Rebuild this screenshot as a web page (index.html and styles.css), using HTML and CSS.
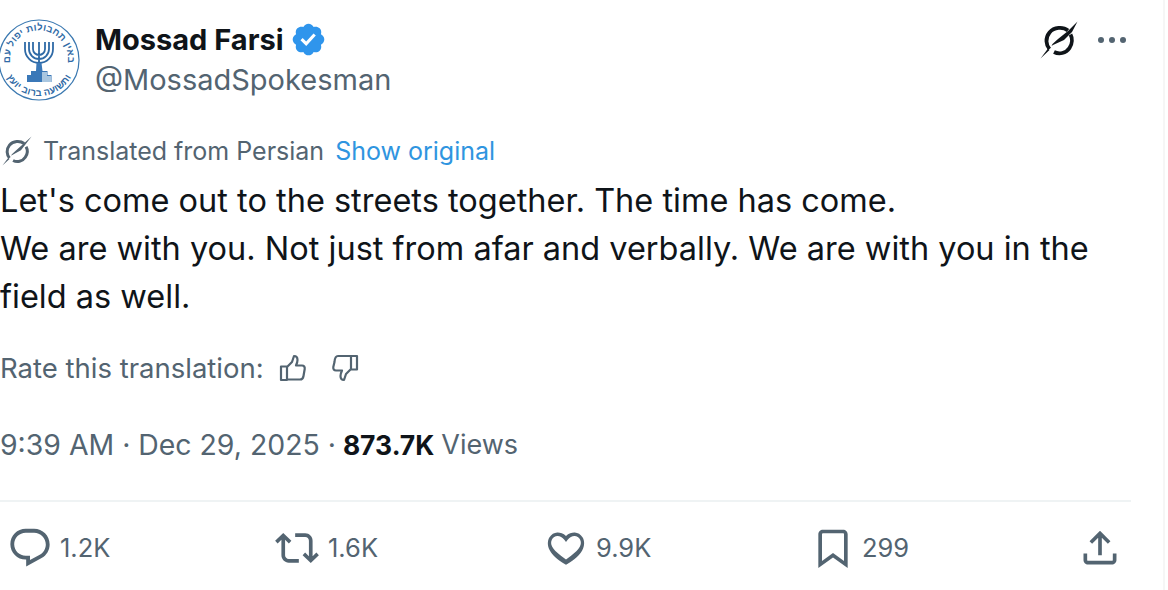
FILE: index.html
```html
<!DOCTYPE html>
<html lang="en">
<head>
<meta charset="utf-8">
<title>Mossad Farsi</title>
<link rel="stylesheet" href="styles.css">
</head>
<body>
<main class="tweet">
  <header class="head">
    <svg class="avatar" viewBox="0 0 82 82" aria-hidden="true">
      <circle cx="41" cy="41" r="40" fill="#fff" stroke="#3a78b0" stroke-width="1.2"/>
      <defs>
        <path id="ring-top" d="M14 51A29 29 0 1 1 68 51"/>
        <path id="ring-bot" d="M6 52A37 37 0 0 0 76 52"/>
      </defs>
      <text class="ringtext" text-anchor="middle"><textPath href="#ring-top" startOffset="50%">באין תחבולות יפול עם</textPath></text>
      <text class="ringtext" text-anchor="middle"><textPath href="#ring-bot" startOffset="50%">ותשועה ברוב יועץ</textPath></text>
      <g fill="none" stroke="#2f6aa6" stroke-width="1.800">
        <path d="M27 23v7a14 14 0 0 0 28 0v-7M31 23v7a10 10 0 0 0 20 0v-7M35 23v7a6 6 0 0 0 12 0v-7M41 23v24"/>
      </g>
      <path d="M38.500 44h5l1 8h5v4h4v7H29v-7h4v-4h5z" fill="#3a78b8"/>
      <path d="M44 53h5v4h4v6h-9z" fill="#a9c6e0"/>
    </svg>
    <div class="identity">
      <div class="name">Mossad Farsi
        <svg class="badge" viewBox="0 0 24 24" aria-hidden="true"><path fill="#2f95ec" d="M22.250 12c0-1.430-.880-2.670-2.190-3.340.460-1.390.200-2.900-.810-3.910s-2.520-1.270-3.910-.810c-.660-1.310-1.910-2.190-3.340-2.190s-2.670.880-3.330 2.190c-1.400-.460-2.910-.200-3.920.810s-1.260 2.520-.800 3.910c-1.310.670-2.200 1.910-2.200 3.340s.890 2.670 2.200 3.340c-.460 1.390-.210 2.900.800 3.910s2.520 1.260 3.910.810c.670 1.310 1.910 2.190 3.340 2.190s2.680-.880 3.340-2.190c1.390.450 2.900.200 3.910-.810s1.270-2.520.810-3.910c1.310-.670 2.190-1.910 2.190-3.340zm-11.710 4.200L6.800 12.460l1.410-1.420 2.260 2.260 4.800-5.230 1.470 1.360-6.200 6.770z"/></svg>
      </div>
      <div class="handle">@MossadSpokesman</div>
    </div>
    <div class="tools">
      <svg class="grok" viewBox="0 0 38 38" aria-hidden="true"><path fill="none" stroke="#0f1419" stroke-width="3.800" d="M28 9.500C23 5.500 14 6 9.500 11.500 5 17 6 24 9.500 28M14 31C19 33.500 26 32.500 29.500 27 32.500 22.500 32.500 17 30.500 13.500"/><path fill="#0f1419" d="M37.500 .500 32 11 24 19 13 24 11.500 25 12.500 23 18 18 28 10zM.500 37.500 8 27.500 9.500 29z"/></svg>
      <div class="dots"><span></span><span></span><span></span></div>
    </div>
  </header>

  <div class="translated">
    <svg class="grok-sm" viewBox="0 0 38 38" aria-hidden="true"><path fill="none" stroke="#536471" stroke-width="3.800" d="M28 9.500C23 5.500 14 6 9.500 11.500 5 17 6 24 9.500 28M14 31C19 33.500 26 32.500 29.500 27 32.500 22.500 32.500 17 30.500 13.500"/><path fill="#536471" d="M37.500 .500 24 18 13 24 11.500 25 12.500 23 18 18zM.500 37.500 8 27.500 9.500 29z"/></svg>
    <span>Translated from Persian</span>
    <a class="link">Show original</a>
  </div>

  <p class="body">Let's come out to the streets together. The time has come.<br>We are with you. Not just from afar and verbally. We are with you in the<br>field as well.</p>

  <div class="rate">
    <span>Rate this translation:</span>
    <svg class="thumb" viewBox="0 0 28 28" aria-hidden="true"><path d="M2 12.500h6V26H2zM8 13l5-5 2-6c2 0 3.500 1.500 3.500 4 0 2-.800 4-1.500 5.500h6c2 0 3 1.500 2.700 3.500l-1.200 7c-.300 2-1.500 3.500-3.500 3.500H8" /></svg>
    <svg class="thumb down" viewBox="0 0 28 28" aria-hidden="true"><path d="M20 2h6v13.500h-6zM20 15l-5 5-2 6c-2 0-3.500-1.500-3.500-4 0-2 .800-4 1.500-5.500H5c-2 0-3-1.500-2.700-3.500l1.200-5C3.800 3.500 5 2 7 2h13"/></svg>
  </div>

  <div class="meta">
    <span class="stamp">9:39 AM · Dec 29, 2025 ·</span>
    <strong>873.7K</strong>
    <span class="views">Views</span>
  </div>

  <div class="actions">
    <div class="action a-reply">
      <svg class="ico" viewBox="0 0 24 24" aria-hidden="true"><path d="M1.751 10c0-4.420 3.584-8 8.005-8h4.366c4.490 0 8.129 3.640 8.129 8.130 0 2.960-1.607 5.680-4.196 7.110l-8.054 4.460v-3.690h-.067c-4.490.100-8.183-3.510-8.183-8.010zm8.005-6c-3.317 0-6.005 2.690-6.005 6 0 3.370 2.770 6.080 6.138 6.010l.351-.010h1.761v2.300l5.087-2.810c1.951-1.080 3.163-3.130 3.163-5.360 0-3.390-2.744-6.130-6.129-6.130H9.756z"/></svg>
      <span>1.2K</span>
    </div>
    <div class="action a-rt">
      <svg class="ico" viewBox="0 0 24 24" aria-hidden="true"><path d="M4.500 3.880l4.432 4.140-1.364 1.460L5.500 7.550V16c0 1.100.896 2 2 2H13v2H7.500c-2.209 0-4-1.790-4-4V7.550L1.432 9.480.068 8.020 4.500 3.880zM16.500 6H11V4h5.500c2.209 0 4 1.790 4 4v8.450l2.068-1.930 1.364 1.460-4.432 4.140-4.432-4.140 1.364-1.460 2.068 1.930V8c0-1.100-.896-2-2-2z"/></svg>
      <span>1.6K</span>
    </div>
    <div class="action a-like">
      <svg class="ico" viewBox="0 0 24 24" aria-hidden="true"><path d="M16.697 5.500c-1.222-.060-2.679.510-3.890 2.160l-.805 1.090-.806-1.090C9.984 6.010 8.526 5.440 7.304 5.500c-1.243.070-2.349.780-2.970 1.910-.611 1.120-.630 2.540.143 3.950.747 1.360 2.278 2.990 4.942 4.960L12 18.250l2.580-1.930c2.664-1.970 4.195-3.600 4.942-4.960.773-1.410.754-2.830.143-3.950-.621-1.130-1.727-1.840-2.968-1.910zm4.187 7.690c-1.351 2.480-4.001 5.120-8.379 7.670l-.503.300-.504-.300c-4.379-2.550-7.029-5.190-8.382-7.670-1.360-2.490-1.260-4.990-.213-6.880C3.950 4.390 5.600 3.600 7.200 3.500c1.400-.070 3.300.400 4.800 1.900 1.500-1.500 3.400-1.970 4.800-1.900 1.600.100 3.250.890 4.300 2.810 1.040 1.890 1.140 4.390-.216 6.880z"/></svg>
      <span>9.9K</span>
    </div>
    <div class="action a-mark">
      <svg class="ico" viewBox="0 0 24 24" aria-hidden="true"><path d="M4 4.500C4 3.120 5.119 2 6.500 2h11C18.881 2 20 3.120 20 4.500v18.440l-8-5.710-8 5.710V4.500zM6.500 4c-.276 0-.5.220-.5.500v14.560l6-4.290 6 4.290V4.500c0-.280-.224-.500-.500-.500h-11z"/></svg>
      <span>299</span>
    </div>
    <div class="action a-share">
      <svg class="ico" viewBox="0 0 24 24" aria-hidden="true"><path d="M12 2.590l5.700 5.700-1.410 1.420L13 6.410V16h-2V6.410l-3.300 3.300-1.410-1.420L12 2.590zM21 15l-.020 3.510c0 1.380-1.120 2.490-2.500 2.490H5.500C4.110 21 3 19.880 3 18.500V15h2v3.500c0 .280.220.500.500.500h12.980c.280 0 .500-.220.500-.500L19 15h2z"/></svg>
    </div>
  </div>
</main>
</body>
</html>
```
FILE: styles.css
```css
* { box-sizing: border-box; }
html, body { margin: 0; padding: 0; background: #fff; overflow: hidden; }
body { width: 1168px; height: 590px; font-family: Inter, "Liberation Sans", sans-serif; color: #0f1419; background: linear-gradient(#f6f6f6, #f6f6f6) 1163px 0 / 2px 100% no-repeat #fff; }
.tweet { width: 1131px; padding-top: 19px; }

.head { display: flex; align-items: flex-start; height: 82px; }
.avatar { width: 82px; height: 82px; margin-left: -2px; flex: none; }
.ringtext { font: 700 9.500px "Liberation Sans", sans-serif; fill: #2f6aa6; letter-spacing: .2px; }
.identity { margin-left: 15px; flex: 1; padding-top: 2px; }
.name { display: flex; align-items: center; gap: 6px; font-size: 29px; font-weight: 700; line-height: 36px; }
.badge { width: 37px; height: 37px; }
.handle { font-size: 29px; line-height: 40px; color: #536471; margin-top: 2px; }
.tools { display: flex; align-items: center; gap: 20px; padding-top: 2px; margin-right: 5px; }
.grok { width: 38px; height: 38px; }
.dots { display: flex; gap: 5px; }
.dots span { width: 6px; height: 6px; border-radius: 50%; background: #536471; }

.translated { display: flex; align-items: center; margin-top: 33px; height: 34px; font-size: 25px; color: #536471; }
.grok-sm { width: 30px; height: 30px; margin-right: 11px; margin-left: 2px; }
.link { color: #2f95e0; margin-left: 11px; }

.body { margin: 9px 0 0; font-size: 32.500px; line-height: 48px; }

.rate { display: flex; align-items: center; margin-top: 27px; height: 40px; font-size: 27.500px; color: #536471; }
.thumb { width: 28px; height: 28px; margin-left: 15px; fill: none; stroke: #536471; stroke-width: 2.200; stroke-linejoin: round; }
.thumb.down { margin-left: 24px; }

.meta { display: flex; gap: 7px; margin-top: 37px; height: 40px; line-height: 40px; font-size: 28.400px; color: #536471; }
.meta strong { color: #0f1419; font-weight: 700; font-size: 26.500px; }
.views { font-size: 27px; }

.actions { display: flex; align-items: center; margin-top: 35px; height: 89px; border-top: 2px solid #eff3f4; padding-top: 4px; font-size: 25.500px; color: #536471; }
.action { display: flex; align-items: center; gap: 7px; flex: none; }
.ico { width: 44px; height: 44px; fill: #536471; }
.a-reply { margin-left: 7px; width: 268px; }
.a-reply .ico { width: 46px; height: 46px; }
.a-rt { width: 269px; gap: 9px; }
.a-like { width: 267px; gap: 8px; }
.a-mark { width: 267px; }
```
